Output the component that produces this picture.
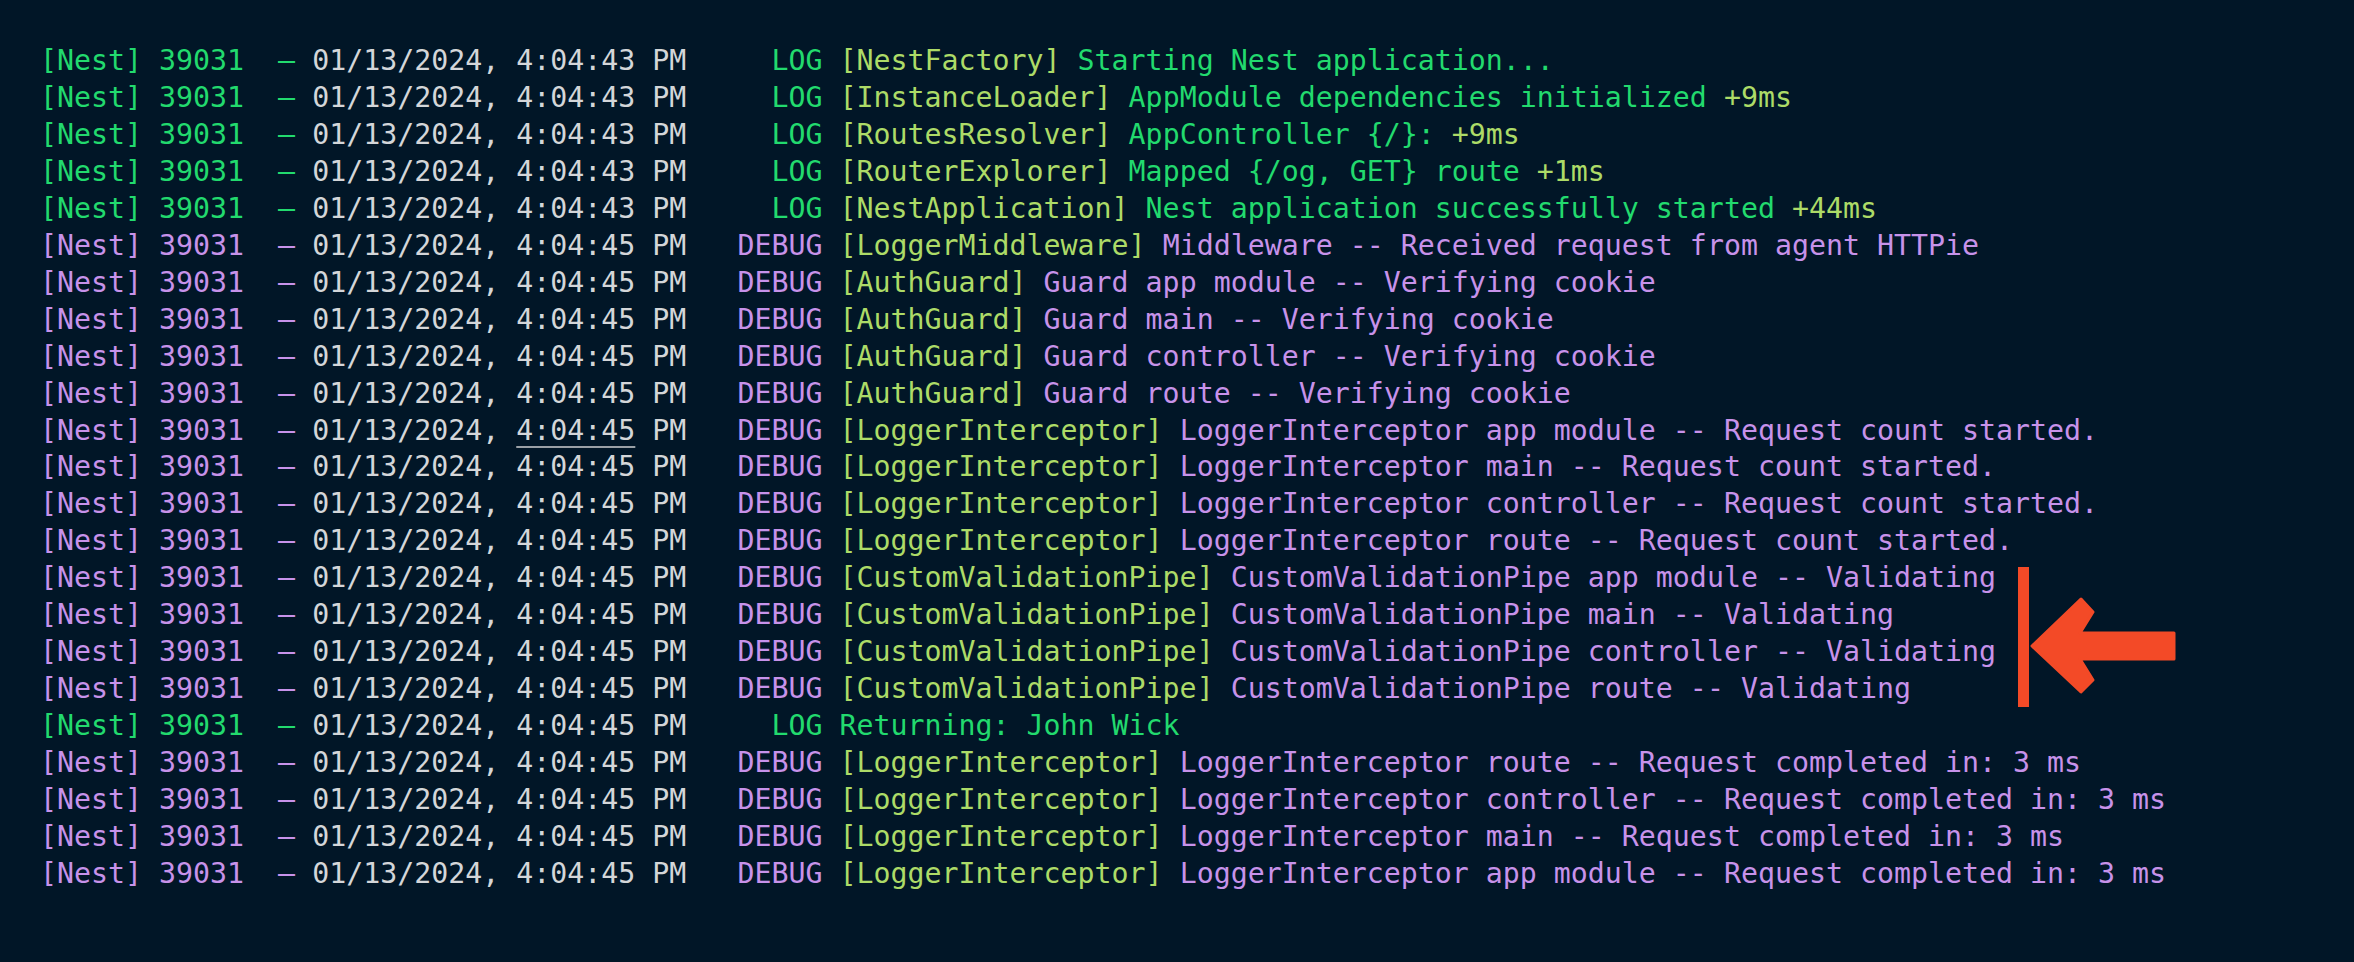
type Line = {
  level: "LOG" | "DEBUG";
  time: string;
  ctx?: string;
  msg: string;
  diff?: string;
  underline?: boolean;
};

const GREEN = "text-[#22da6e]";
const PURPLE = "text-[#c792ea]";
const YELLOW = "text-[#addb67]";
const GRAY = "text-[#d4d6d9]";

const lines: Line[] = [
  { level: "LOG", time: "4:04:43", ctx: "NestFactory", msg: "Starting Nest application..." },
  { level: "LOG", time: "4:04:43", ctx: "InstanceLoader", msg: "AppModule dependencies initialized", diff: "+9ms" },
  { level: "LOG", time: "4:04:43", ctx: "RoutesResolver", msg: "AppController {/}:", diff: "+9ms" },
  { level: "LOG", time: "4:04:43", ctx: "RouterExplorer", msg: "Mapped {/og, GET} route", diff: "+1ms" },
  { level: "LOG", time: "4:04:43", ctx: "NestApplication", msg: "Nest application successfully started", diff: "+44ms" },
  { level: "DEBUG", time: "4:04:45", ctx: "LoggerMiddleware", msg: "Middleware -- Received request from agent HTTPie" },
  { level: "DEBUG", time: "4:04:45", ctx: "AuthGuard", msg: "Guard app module -- Verifying cookie" },
  { level: "DEBUG", time: "4:04:45", ctx: "AuthGuard", msg: "Guard main -- Verifying cookie" },
  { level: "DEBUG", time: "4:04:45", ctx: "AuthGuard", msg: "Guard controller -- Verifying cookie" },
  { level: "DEBUG", time: "4:04:45", ctx: "AuthGuard", msg: "Guard route -- Verifying cookie" },
  { level: "DEBUG", time: "4:04:45", ctx: "LoggerInterceptor", msg: "LoggerInterceptor app module -- Request count started.", underline: true },
  { level: "DEBUG", time: "4:04:45", ctx: "LoggerInterceptor", msg: "LoggerInterceptor main -- Request count started." },
  { level: "DEBUG", time: "4:04:45", ctx: "LoggerInterceptor", msg: "LoggerInterceptor controller -- Request count started." },
  { level: "DEBUG", time: "4:04:45", ctx: "LoggerInterceptor", msg: "LoggerInterceptor route -- Request count started." },
  { level: "DEBUG", time: "4:04:45", ctx: "CustomValidationPipe", msg: "CustomValidationPipe app module -- Validating" },
  { level: "DEBUG", time: "4:04:45", ctx: "CustomValidationPipe", msg: "CustomValidationPipe main -- Validating" },
  { level: "DEBUG", time: "4:04:45", ctx: "CustomValidationPipe", msg: "CustomValidationPipe controller -- Validating" },
  { level: "DEBUG", time: "4:04:45", ctx: "CustomValidationPipe", msg: "CustomValidationPipe route -- Validating" },
  { level: "LOG", time: "4:04:45", msg: "Returning: John Wick" },
  { level: "DEBUG", time: "4:04:45", ctx: "LoggerInterceptor", msg: "LoggerInterceptor route -- Request completed in: 3 ms" },
  { level: "DEBUG", time: "4:04:45", ctx: "LoggerInterceptor", msg: "LoggerInterceptor controller -- Request completed in: 3 ms" },
  { level: "DEBUG", time: "4:04:45", ctx: "LoggerInterceptor", msg: "LoggerInterceptor main -- Request completed in: 3 ms" },
  { level: "DEBUG", time: "4:04:45", ctx: "LoggerInterceptor", msg: "LoggerInterceptor app module -- Request completed in: 3 ms" },
];

function LogLine({ line }: { line: Line }) {
  const color = line.level === "LOG" ? GREEN : PURPLE;
  // nest pads the level to 7 chars
  const level = line.level.padStart(7, " ");
  return (
    <div className="whitespace-pre">
      <span className={color}>[Nest] 39031  – </span>
      <span className={GRAY}>01/13/2024, </span>
      <span
        className={
          line.underline
            ? GRAY + " underline decoration-[#9aa0a6] decoration-2 underline-offset-[6px]"
            : GRAY
        }
      >
        {line.time}
      </span>
      <span className={GRAY}> PM </span>
      <span className={color}>{level} </span>
      {line.ctx && <span className={YELLOW}>[{line.ctx}] </span>}
      <span className={color}>{line.msg}</span>
      {line.diff && <span className={YELLOW}> {line.diff}</span>}
    </div>
  );
}

function Arrow() {
  return (
    <svg
      className="absolute left-[2010px] top-[560px]"
      width="175"
      height="155"
      viewBox="2010 560 175 155"
    >
      <rect x="2018" y="567" width="11" height="140" fill="#f34a27" />
      <polygon
        points="2032,646 2081,599 2093,612 2080,633 2174,633 2174,659 2080,659 2093,680 2081,692"
        fill="#f34a27"
        stroke="#f34a27"
        strokeWidth="3"
        strokeLinejoin="round"
      />
    </svg>
  );
}

export default function App() {
  return (
    <div className="relative w-[2354px] h-[962px] bg-[#011627] overflow-hidden">
      <div className="pt-[43px] pl-[40px] font-['DejaVu_Sans_Mono',monospace] text-[28.25px] leading-[36.95px]">
        {lines.map((l, i) => (
          <LogLine key={i} line={l} />
        ))}
      </div>
      <Arrow />
    </div>
  );
}
